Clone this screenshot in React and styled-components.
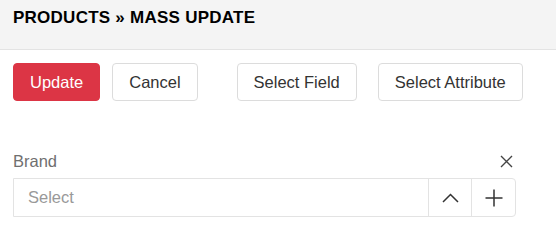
import React from 'react';
import styled, { createGlobalStyle } from 'styled-components';

const GlobalStyle = createGlobalStyle`
  * { box-sizing: border-box; }
  body {
    margin: 0;
    background: #fff;
    font-family: "Liberation Sans", Arial, sans-serif;
    color: #333;
  }
`;

const Header = styled.div`
  height: 50px;
  padding: 8px 13px 0;
  background: #f4f4f4;
  border-bottom: 1px solid #e3e3e3;
`;

const Title = styled.h1`
  margin: 0;
  font-size: 17px;
  line-height: 20px;
  font-weight: bold;
  letter-spacing: 0.25px;
  color: #000;
`;

const Content = styled.div`
  padding: 13px;
`;

const Toolbar = styled.div`
  display: flex;
  align-items: center;
`;

const Button = styled.button`
  flex-shrink: 0;
  white-space: nowrap;
  height: 38px;
  padding: 0 16px;
  margin-right: ${(p) => p.$gap || 12}px;
  border-radius: 4px;
  font-family: inherit;
  font-size: 16.5px;
  border: 1px solid ${(p) => (p.$primary ? '#dc3545' : '#dcdcdc')};
  background: ${(p) => (p.$primary ? '#dc3545' : '#fff')};
  color: ${(p) => (p.$primary ? '#fff' : '#333')};
  cursor: pointer;
`;

const Field = styled.div`
  width: 503px;
  margin-top: 48px;
`;

const LabelRow = styled.div`
  display: flex;
  align-items: center;
  justify-content: space-between;
  height: 24px;
  margin-bottom: 5px;
`;

const Label = styled.label`
  font-size: 16.5px;
  line-height: 24px;
  color: #6f6f6f;
`;

const IconButton = styled.button`
  width: 20px;
  height: 20px;
  padding: 0;
  border: 0;
  background: none;
  display: flex;
  align-items: center;
  justify-content: center;
  cursor: pointer;
`;

const SelectBox = styled.div`
  display: flex;
  height: 39px;
  border: 1px solid #e3e3e3;
  border-radius: 0 4px 4px 0;
`;

const Placeholder = styled.div`
  flex: 1;
  display: flex;
  align-items: center;
  padding-left: 14px;
  font-size: 16.5px;
  color: #999;
`;

const Addon = styled.div`
  width: ${(p) => p.$w}px;
  display: flex;
  align-items: center;
  justify-content: center;
  border-left: 1px solid #e3e3e3;
`;

const App = () => (
  <>
    <GlobalStyle />
    <Header>
      <Title>PRODUCTS » MASS UPDATE</Title>
    </Header>
    <Content>
      <Toolbar>
        <Button $primary>Update</Button>
        <Button $gap={39}>Cancel</Button>
        <Button $gap={21}>Select Field</Button>
        <Button>Select Attribute</Button>
      </Toolbar>
      <Field>
        <LabelRow>
          <Label>Brand</Label>
          <IconButton>
            <svg width="13" height="13" viewBox="0 0 13 13">
              <path d="M1 1L12 12M12 1L1 12" stroke="#444" strokeWidth="1.4" />
            </svg>
          </IconButton>
        </LabelRow>
        <SelectBox>
          <Placeholder>Select</Placeholder>
          <Addon $w={43}>
            <svg width="17" height="10" viewBox="0 0 17 10">
              <path d="M1 9L8.5 1.5L16 9" fill="none" stroke="#333" strokeWidth="1.5" />
            </svg>
          </Addon>
          <Addon $w={44}>
            <svg width="18" height="18" viewBox="0 0 18 18">
              <path d="M9 0.5V17.5M0.5 9H17.5" stroke="#333" strokeWidth="1.5" />
            </svg>
          </Addon>
        </SelectBox>
      </Field>
    </Content>
  </>
);

export default App;
